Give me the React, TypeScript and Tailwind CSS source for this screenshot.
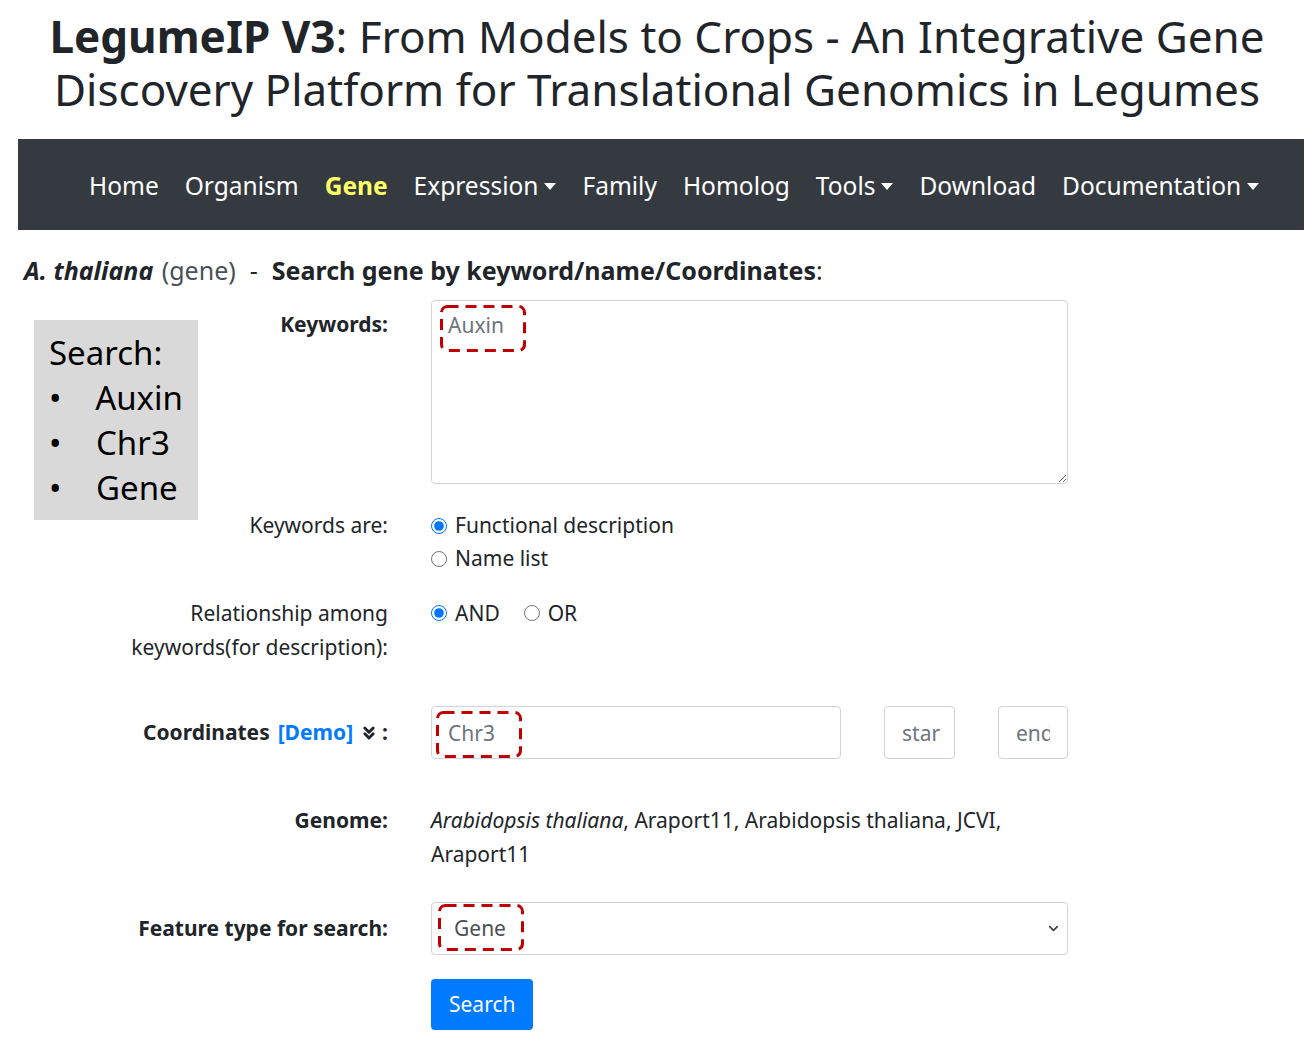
import { ChevronsDown, ChevronDown } from "lucide-react";

const font = { fontFamily: '"Noto Sans", "Open Sans", sans-serif' };

// red dashed highlight drawn on top of a field
function Mark({ w, h, className }: { w: number; h: number; className: string }) {
  return (
    <svg
      width={w}
      height={h}
      className={`absolute pointer-events-none ${className}`}
    >
      <rect
        x="1.5"
        y="1.5"
        width={w - 3}
        height={h - 3}
        rx="6"
        fill="none"
        stroke="#c00000"
        strokeWidth="3"
        strokeDasharray="11 7"
      />
    </svg>
  );
}

function Caret() {
  return (
    <span className="ml-[6px] inline-block h-0 w-0 border-x-[6px] border-t-[7px] border-x-transparent border-t-white align-middle" />
  );
}

const navItems = [
  { label: "Home" },
  { label: "Organism" },
  { label: "Gene", active: true },
  { label: "Expression", caret: true },
  { label: "Family" },
  { label: "Homolog" },
  { label: "Tools", caret: true },
  { label: "Download" },
  { label: "Documentation", caret: true },
];

export default function App() {
  return (
    <div className="relative min-h-[1041px] w-[1314px] bg-white text-[#212529]" style={font}>
      {/* title */}
      <h1 className="pt-[10px] text-center text-[44px] leading-[53px] text-[#212529]">
        <b className="font-bold">LegumeIP V3</b>: From Models to Crops - An Integrative Gene
        <br />
        Discovery Platform for Translational Genomics in Legumes
      </h1>

      {/* navbar */}
      <nav className="ml-[18px] mr-[10px] mt-[23px] flex h-[91px] items-center gap-[26px] bg-[#343a40] pl-[71px] pt-[3px] text-[24.5px] text-white">
        {navItems.map((item) => (
          <span
            key={item.label}
            className={`flex items-center whitespace-nowrap ${
              item.active ? "font-bold text-[#ffff66]" : ""
            }`}
          >
            {item.label}
            {item.caret && <Caret />}
          </span>
        ))}
      </nav>

      {/* page heading */}
      <div className="ml-[24px] mt-[24px] text-[25px] leading-[32px]">
        <b className="pr-[2px] font-bold italic">A. thaliana</b>{" "}
        <span className="text-[#495057]">(gene)</span>
        <span className="mx-[14px]">-</span>
        <b className="font-bold">Search gene by keyword/name/Coordinates</b>:
      </div>

      {/* annotation box */}
      <div className="absolute left-[34px] top-[320px] w-[164px] bg-[#d9d9d9] px-[15px] pb-[10px] pt-[10px] text-[33px] leading-[45px] text-black">
        <div>Search:</div>
        {["Auxin", "Chr3", "Gene"].map((t) => (
          <div key={t} className="flex items-center">
            <span className="w-[47px]">•</span>
            {t}
          </div>
        ))}
      </div>

      {/* form */}
      <div className="mt-[14px] grid grid-cols-[364px_637px] gap-x-[43px] pl-[24px] text-[21px] leading-[33px]">
        {/* Keywords */}
        <label className="pt-[8px] text-right font-bold">Keywords:</label>
        <div className="relative">
          <textarea
            className="block h-[184px] w-full resize-y rounded-[4px] border border-[#ced4da] px-[16px] py-[8px] text-[21px] leading-[33px] placeholder-[#6c757d] outline-none"
            placeholder="Auxin"
            style={font}
          />
          <Mark w={86} h={47} className="left-[9px] top-[5px]" />
        </div>

        {/* Keywords are */}
        <label className="mt-[25px] text-right">Keywords are:</label>
        <div className="mt-[25px]">
          <div className="flex items-center gap-[8px]">
            <input type="radio" name="kt" defaultChecked className="h-[16px] w-[16px] accent-[#0075ff]" />
            Functional description
          </div>
          <div className="flex items-center gap-[8px]">
            <input type="radio" name="kt" className="h-[16px] w-[16px]" />
            Name list
          </div>
        </div>

        {/* Relationship */}
        <label className="mt-[21px] text-right leading-[34px]">
          Relationship among
          <br />
          keywords(for description):
        </label>
        <div className="mt-[21px] flex h-[34px] items-center">
          <span className="flex items-center gap-[8px]">
            <input type="radio" name="rel" defaultChecked className="h-[16px] w-[16px] accent-[#0075ff]" />
            AND
          </span>
          <span className="ml-[24px] flex items-center gap-[8px]">
            <input type="radio" name="rel" className="h-[16px] w-[16px]" />
            OR
          </span>
        </div>

        {/* Coordinates */}
        <label className="mt-[42px] flex h-[53px] items-center justify-end font-bold">
          Coordinates
          <span className="ml-[8px] text-[#007bff]">[Demo]</span>
          <ChevronsDown className="ml-[6px]" size={20} strokeWidth={3.5} />
          <span className="ml-[3px]">:</span>
        </label>
        <div className="mt-[42px] flex h-[53px] items-center">
          <div className="relative">
            <input
              className="h-[53px] w-[410px] rounded-[4px] border border-[#ced4da] px-[16px] text-[21px] placeholder-[#6c757d] outline-none"
              placeholder="Chr3"
              style={font}
            />
            <Mark w={86} h={47} className="left-[5px] top-[5px]" />
          </div>
          <input
            className="ml-[43px] h-[53px] w-[71px] rounded-[4px] border border-[#ced4da] pl-[17px] pr-[14px] text-[21px] placeholder-[#6c757d] outline-none"
            placeholder="start"
            style={font}
          />
          <input
            className="ml-[43px] h-[53px] w-[70px] rounded-[4px] border border-[#ced4da] px-[17px] text-[21px] placeholder-[#6c757d] outline-none"
            placeholder="end"
            style={font}
          />
        </div>

        {/* Genome */}
        <label className="mt-[44px] text-right font-bold leading-[34px]">Genome:</label>
        <div className="mt-[44px] leading-[34px]">
          <i>Arabidopsis thaliana</i>, Araport11, Arabidopsis thaliana, JCVI, Araport11
        </div>

        {/* Feature type */}
        <label className="mt-[31px] flex h-[53px] items-center justify-end font-bold">
          Feature type for search:
        </label>
        <div className="relative mt-[31px]">
          <div className="flex h-[53px] items-center justify-between rounded-[4px] border border-[#ced4da] pl-[22px] pr-[6px] text-[#495057]">
            Gene
            <ChevronDown size={15} strokeWidth={2.5} className="text-[#343a40]" />
          </div>
          <Mark w={86} h={47} className="left-[7px] top-[2px]" />
        </div>

        {/* Search */}
        <div />
        <div className="mt-[24px]">
          <button className="h-[51px] rounded-[4px] bg-[#007bff] px-[18px] text-[21px] text-white">
            Search
          </button>
        </div>
      </div>
    </div>
  );
}
